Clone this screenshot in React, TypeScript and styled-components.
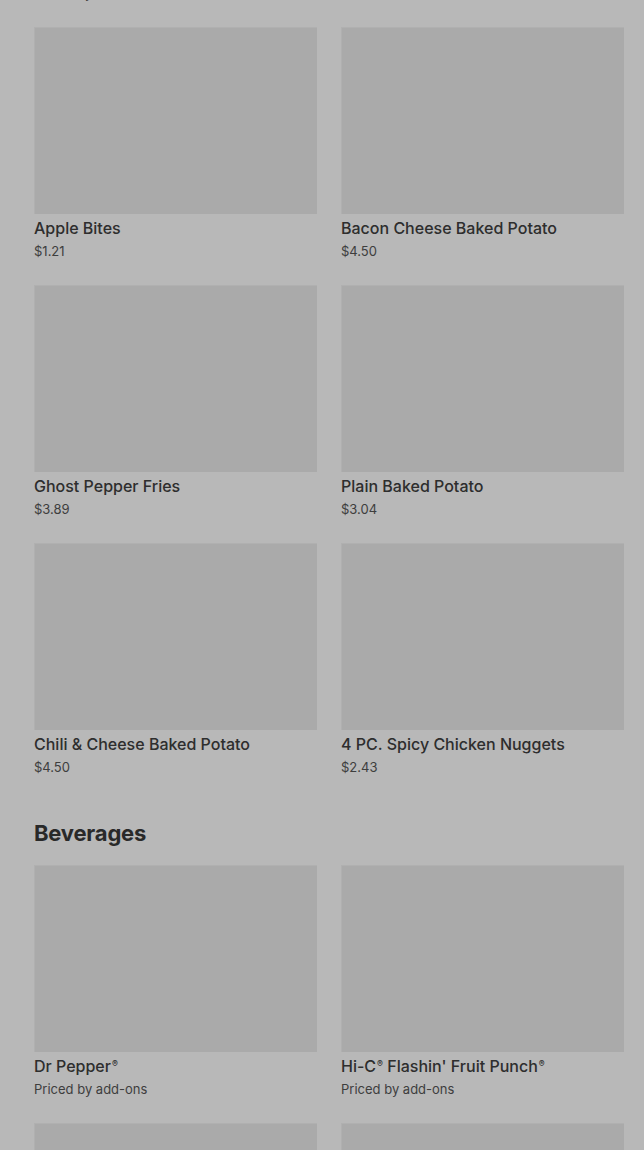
import React from "react";
import styled, { createGlobalStyle } from "styled-components";

const GlobalStyle = createGlobalStyle`
  html, body {
    margin: 0;
    padding: 0;
    background: #ffffff;
    overflow: hidden;
  }
  * {
    box-sizing: border-box;
  }
`;

const Page = styled.div`
  width: 644px;
  height: 1150px;
  overflow: hidden;
  position: relative;
  font-family: Inter, Roboto, "Liberation Sans", sans-serif;
`;

// page is scrolled down part way; the offset keeps the previous row above the fold
const ScrollContent = styled.div`
  margin-top: -231px;
  padding: 0 20px 0 34px;
`;

const Section = styled.section`
  & + & {
    margin-top: 42px;
  }
`;

const SectionTitle = styled.h2`
  margin: 0 0 18px 0;
  font-family: Inter, "Liberation Sans", sans-serif;
  font-weight: 700;
  font-size: 22px;
  line-height: 28px;
  letter-spacing: -0.2px;
  color: #3a3a3a;
`;

const Grid = styled.div`
  display: grid;
  grid-template-columns: 283px 283px;
  column-gap: 24px;
  row-gap: 24px;
`;

const Card = styled.div`
  display: flex;
  flex-direction: column;
`;

const Thumb = styled.div`
  height: 187px;
  background: #ececec;
  border-top: 1px solid #f4f4f4;
  border-left: 1px solid #f4f4f4;
`;

const ItemName = styled.div`
  margin-top: 3px;
  font-weight: 500;
  font-size: 16px;
  line-height: 22px;
  color: #404040;
  white-space: nowrap;
`;

const Reg = styled.sup`
  font-size: 0.55em;
  line-height: 0;
  vertical-align: 0.6em;
  margin-left: 1px;
`;

const ItemPrice = styled.div`
  margin-top: 2px;
  font-weight: 400;
  font-size: 13px;
  line-height: 20px;
  color: #575757;
`;

const Backdrop = styled.div`
  position: fixed;
  inset: 0;
  background: rgba(0, 0, 0, 0.28);
`;

type Item = { name: string; price: string };

const sides: Item[] = [
  { name: "Large Coca-Cola®", price: "Priced by add-ons" },
  { name: "Side Salad", price: "$2.19" },
  { name: "Apple Bites", price: "$1.21" },
  { name: "Bacon Cheese Baked Potato", price: "$4.50" },
  { name: "Ghost Pepper Fries", price: "$3.89" },
  { name: "Plain Baked Potato", price: "$3.04" },
  { name: "Chili & Cheese Baked Potato", price: "$4.50" },
  { name: "4 PC. Spicy Chicken Nuggets", price: "$2.43" },
];

const beverages: Item[] = [
  { name: "Dr Pepper®", price: "Priced by add-ons" },
  { name: "Hi-C® Flashin' Fruit Punch®", price: "Priced by add-ons" },
  { name: "Sprite®", price: "Priced by add-ons" },
  { name: "Coca-Cola®", price: "Priced by add-ons" },
];

// render ® marks as small raised glyphs like the menu does
const NameText = ({ name }: { name: string }) => {
  const parts = name.split("®");
  return (
    <>
      {parts.map((p, i) => (
        <React.Fragment key={i}>
          {p}
          {i < parts.length - 1 && <Reg>®</Reg>}
        </React.Fragment>
      ))}
    </>
  );
};

const MenuCard = ({ item }: { item: Item }) => (
  <Card>
    <Thumb />
    <ItemName>
      <NameText name={item.name} />
    </ItemName>
    <ItemPrice>{item.price}</ItemPrice>
  </Card>
);

const App = () => {
  return (
    <>
      <GlobalStyle />
      <Page>
        <ScrollContent>
          <Section>
            <Grid>
              {sides.map((it) => (
                <MenuCard key={it.name} item={it} />
              ))}
            </Grid>
          </Section>
          <Section>
            <SectionTitle>Beverages</SectionTitle>
            <Grid>
              {beverages.map((it) => (
                <MenuCard key={it.name} item={it} />
              ))}
            </Grid>
          </Section>
        </ScrollContent>
        <Backdrop />
      </Page>
    </>
  );
};

export default App;
